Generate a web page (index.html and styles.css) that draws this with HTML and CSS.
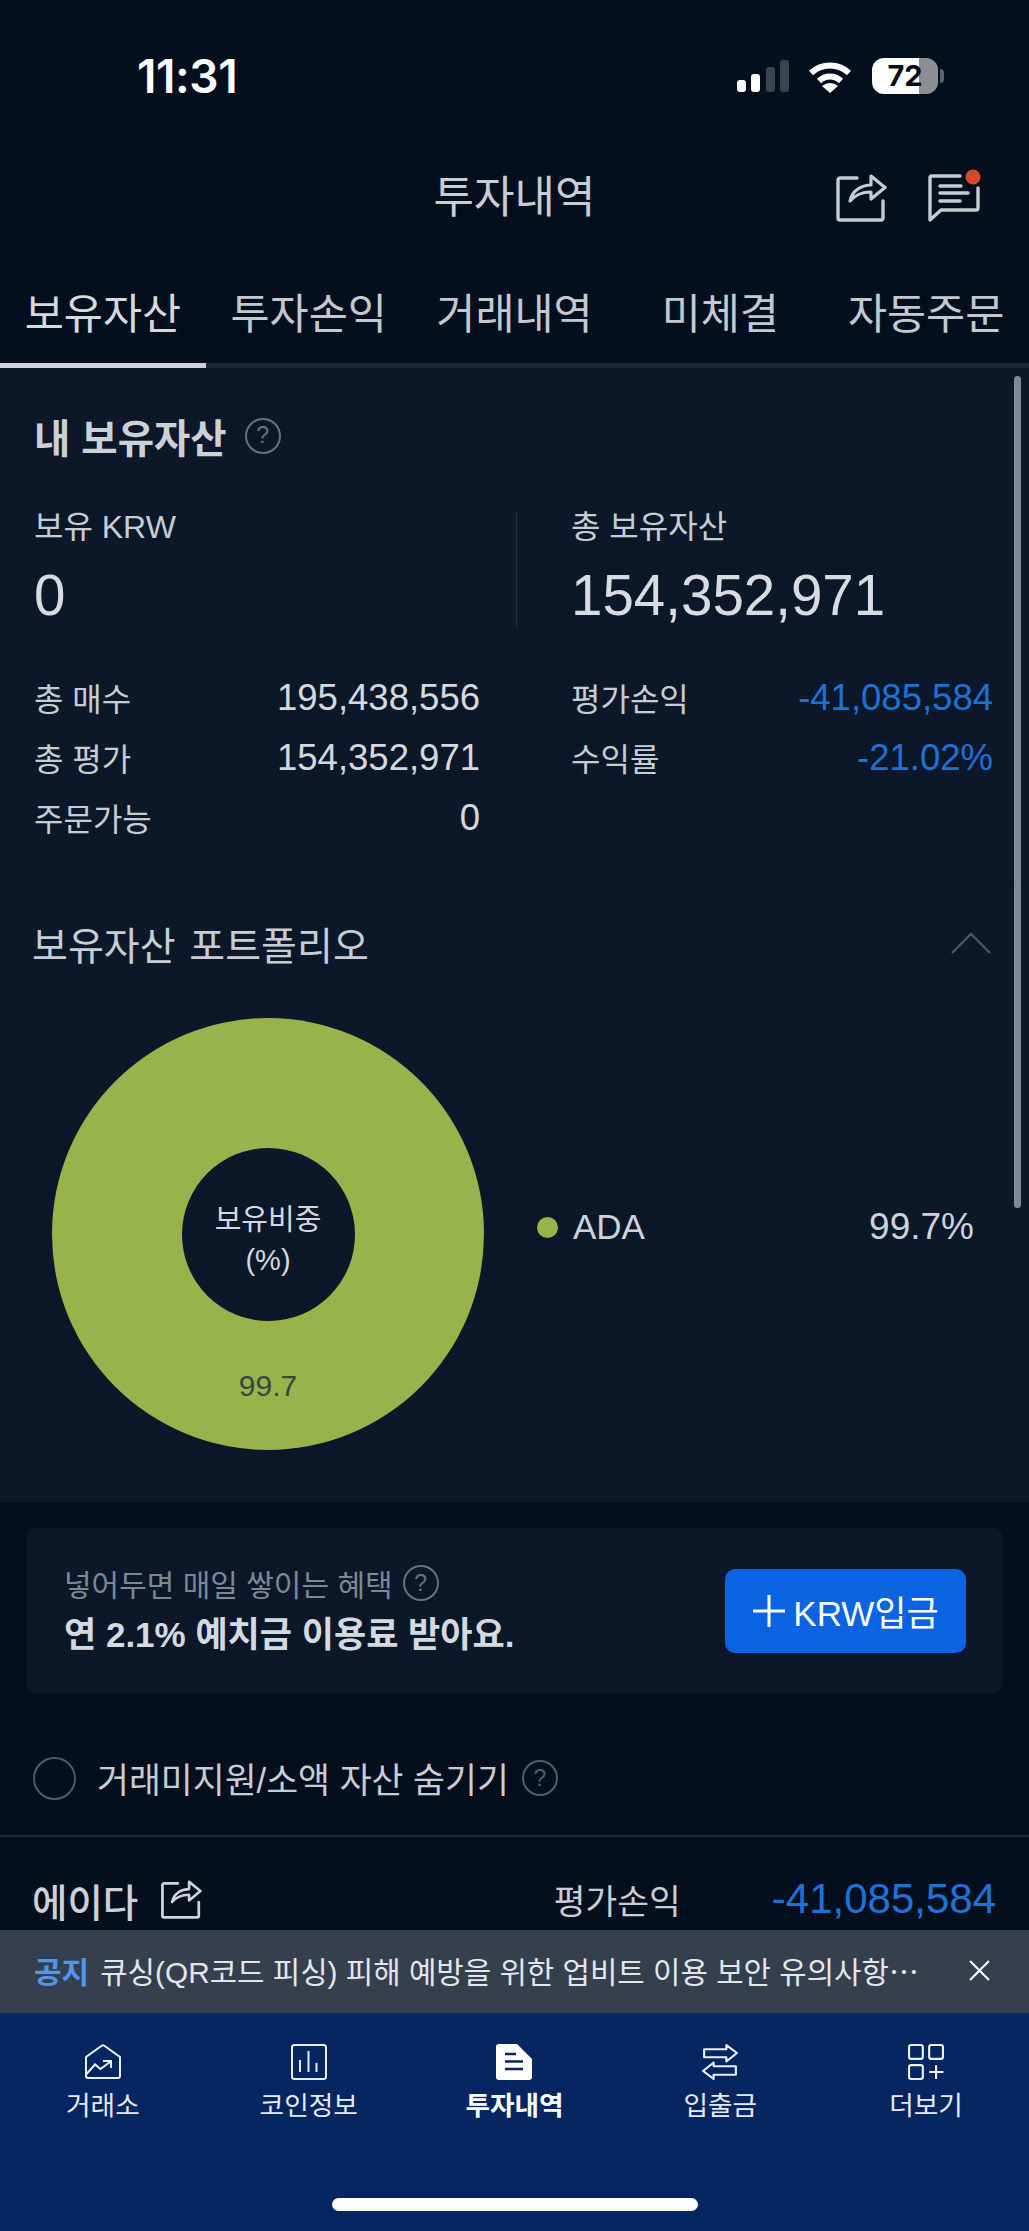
FILE: index.html
```html
<!DOCTYPE html>
<html lang="ko">
<head>
<meta charset="utf-8">
<title>투자내역</title>
<link rel="stylesheet" href="styles.css">
</head>
<body>
<svg class="defs" width="0" height="0" aria-hidden="true">
  <symbol id="share" viewBox="0 0 52 49">
    <path d="M22 4H5a2 2 0 0 0-2 2v38a2 2 0 0 0 2 2h41a2 2 0 0 0 2-2V27" fill="none" stroke="currentColor" stroke-width="3.4" stroke-linecap="round"/>
    <path d="M15 27C17 17 26 11 36 11V2L50 13.5 36 25V18C27 18 20 21 15 27Z" fill="none" stroke="currentColor" stroke-width="3.2" stroke-linejoin="round"/>
  </symbol>
</svg>
<div class="screen">
  <div class="status">
    <span class="time">11:31</span>
    <div class="status-icons">
      <div class="signal"><i class="bar b1"></i><i class="bar b2"></i><i class="bar b3"></i><i class="bar b4"></i></div>
      <svg class="wifi" viewBox="0 0 44 33"><path d="M3 13A28 28 0 0 1 41 13M11 21A16 16 0 0 1 33 21" fill="none" stroke="#fff" stroke-width="6"/><path d="M22 33L14 26Q22 20 30 26Z" fill="#fff"/></svg>
      <div class="battery"><span class="batt-body">72</span><span class="batt-cap"></span></div>
    </div>
  </div>

  <header class="header">
    <span></span>
    <h1 class="title">투자내역</h1>
    <div class="actions">
      <svg class="share-lg"><use href="#share"/></svg>
      <svg class="chat" viewBox="0 0 52 48">
        <path d="M31 2H3a2 2 0 0 0-2 2v42l11-10h35a2 2 0 0 0 2-2V14" fill="none" stroke="#c6cbd3" stroke-width="3.4" stroke-linecap="round" stroke-linejoin="round"/>
        <path d="M11 12H32M11 19H39M11 27H31" stroke="#c6cbd3" stroke-width="3.4" stroke-linecap="round"/>
        <circle cx="44" cy="3" r="7.5" fill="#d5482f"/>
      </svg>
    </div>
  </header>

  <nav class="tabs">
    <div class="tab active">보유자산</div>
    <div class="tab">투자손익</div>
    <div class="tab">거래내역</div>
    <div class="tab">미체결</div>
    <div class="tab">자동주문</div>
  </nav>

  <main class="panel">
    <div class="scrollbar"></div>
    <section class="assets">
      <div class="assets-title"><h2>내 보유자산</h2><span class="help">?</span></div>
      <div class="summary">
        <div class="sum-col">
          <div class="sum-label">보유 KRW</div>
          <div class="sum-value">0</div>
        </div>
        <div class="sum-col sum-right">
          <div class="sum-label">총 보유자산</div>
          <div class="sum-value">154,352,971</div>
        </div>
      </div>
      <div class="stats">
        <div class="stat-col">
          <div class="stat-row"><span>총 매수</span><b>195,438,556</b></div>
          <div class="stat-row"><span>총 평가</span><b>154,352,971</b></div>
          <div class="stat-row"><span>주문가능</span><b>0</b></div>
        </div>
        <div class="stat-col">
          <div class="stat-row"><span>평가손익</span><b class="neg">-41,085,584</b></div>
          <div class="stat-row"><span>수익률</span><b class="neg">-21.02%</b></div>
        </div>
      </div>
    </section>

    <section class="portfolio">
      <div class="port-head">
        <h2>보유자산 포트폴리오</h2>
        <svg class="chevron" viewBox="0 0 40 22"><path d="M1 21L20 2 39 21" fill="none" stroke="#4b5563" stroke-width="2.4"/></svg>
      </div>
      <div class="port-body">
        <div class="donut">
          <div class="hole">보유비중<br>(%)</div>
          <span class="donut-value">99.7</span>
        </div>
        <div class="legend">
          <i class="dot"></i><span class="leg-name">ADA</span><span class="leg-value">99.7%</span>
        </div>
      </div>
    </section>
  </main>

  <section class="banner">
    <div class="banner-text">
      <div class="banner-sub"><span>넣어두면 매일 쌓이는 혜택</span><span class="help">?</span></div>
      <div class="banner-main">연 2.1% 예치금 이용료 받아요.</div>
    </div>
    <div class="deposit">
      <svg class="plus" viewBox="0 0 34 34"><path d="M17 1V33M1 17H33" stroke="#fff" stroke-width="3"/></svg>
      <span>KRW입금</span>
    </div>
  </section>

  <div class="hide-row">
    <i class="radio"></i>
    <span>거래미지원/소액 자산 숨기기</span>
    <span class="help">?</span>
  </div>

  <div class="holding">
    <div class="hold-left"><strong>에이다</strong><svg class="share-sm"><use href="#share"/></svg></div>
    <div class="hold-right"><span>평가손익</span><b>-41,085,584</b></div>
  </div>

  <div class="notice">
    <strong>공지</strong>
    <span class="notice-text">큐싱(QR코드 피싱) 피해 예방을 위한 업비트 이용 보안 유의사항⋯</span>
    <svg class="close" viewBox="0 0 20 20"><path d="M1 1L19 19M19 1L1 19" stroke="#fff" stroke-width="2"/></svg>
  </div>

  <footer class="bottom">
    <div class="nav">
      <div class="nav-item">
        <svg class="nav-icon" viewBox="0 0 36 36"><path d="M17 1.5a2 2 0 0 1 2 0L35 13V32a2 2 0 0 1-2 2H3a2 2 0 0 1-2-2V13Z" fill="none" stroke="#eaf0f8" stroke-width="2"/><path d="M1.500 30L10 20.500 15.500 25 25 18M18 17H26V24" fill="none" stroke="#eaf0f8" stroke-width="2"/></svg>
        <span>거래소</span>
      </div>
      <div class="nav-item">
        <svg class="nav-icon" viewBox="0 0 36 36"><rect x="1" y="1" width="34" height="34" rx="2.500" fill="none" stroke="#eaf0f8" stroke-width="2"/><path d="M9 16V28M17.500 7V28M25.500 19V28" stroke="#eaf0f8" stroke-width="2"/></svg>
        <span>코인정보</span>
      </div>
      <div class="nav-item current">
        <svg class="nav-icon" viewBox="0 0 36 36"><path d="M3 0H21L36 15V33a3 3 0 0 1-3 3H3a3 3 0 0 1-3-3V3a3 3 0 0 1 3-3Z" fill="#fff"/><path d="M9 10H20M9 17.500H27M9 25H27" stroke="#052660" stroke-width="2.600"/></svg>
        <span>투자내역</span>
      </div>
      <div class="nav-item">
        <svg class="nav-icon" viewBox="0 0 34 34"><path d="M2 5H23V1L33 8.500 23 16.500V12.500H2Z" fill="none" stroke="#eaf0f8" stroke-width="2" stroke-linejoin="round"/><path d="M32 21H11V17.500L1 25.500 11 33V29H32Z" fill="none" stroke="#eaf0f8" stroke-width="2" stroke-linejoin="round"/></svg>
        <span>입출금</span>
      </div>
      <div class="nav-item">
        <svg class="nav-icon" viewBox="0 0 34 34"><rect x="1" y="1" width="13" height="13" rx="2" fill="none" stroke="#eaf0f8" stroke-width="2"/><rect x="20" y="1" width="13" height="13" rx="2" fill="none" stroke="#eaf0f8" stroke-width="2"/><rect x="1" y="20" width="13" height="13" rx="2" fill="none" stroke="#eaf0f8" stroke-width="2"/><path d="M20 26.500H33.500M26.500 20V33" stroke="#eaf0f8" stroke-width="2"/></svg>
        <span>더보기</span>
      </div>
    </div>
    <div class="home"></div>
  </footer>
</div>
</body>
</html>
```
FILE: styles.css
```css
* { box-sizing: border-box; }
html, body { margin: 0; padding: 0; }
body {
  width: 1029px;
  height: 2231px;
  overflow: hidden;
  background: #040f1e;
  color: #c8ccd4;
  font-family: "Liberation Sans", "Noto Sans CJK KR", sans-serif;
}
.defs { position: absolute; }
h1, h2 { margin: 0; font-weight: 400; }
b { font-weight: 400; }
i { display: block; }

.screen { width: 1029px; height: 2231px; display: flex; flex-direction: column; }

/* status bar */
.status { height: 130px; padding: 22px 85px 0 137px; display: flex; align-items: center; justify-content: space-between; }
.time { font-family: Inter, "Liberation Sans", sans-serif; font-size: 46px; font-weight: 600; color: #fff; letter-spacing: -0.4px; }
.status-icons { display: flex; align-items: center; }
.signal { display: flex; align-items: flex-end; gap: 5.5px; height: 32px; margin-right: 19px; }
.bar { width: 9px; border-radius: 3px; background: #fff; }
.b1 { height: 12px; }
.b2 { height: 18px; }
.b3 { height: 25px; background: #3a4350; }
.b4 { height: 32px; background: #3a4350; }
.wifi { width: 44px; height: 33px; margin-right: 20px; }
.battery { display: flex; align-items: center; gap: 2px; }
.batt-body {
  width: 66px; height: 36px; border-radius: 12px;
  background: linear-gradient(to right, #fff 71%, #8b8f94 71%);
  color: #050b14; font-family: Inter, "Liberation Sans", sans-serif;
  font-size: 29px; font-weight: 700; line-height: 36px; text-align: center;
}
.batt-cap { width: 4px; height: 14px; border-radius: 0 4px 4px 0; background: #5c6269; }

/* header */
.header { height: 130px; display: grid; grid-template-columns: 1fr auto 1fr; align-items: center; padding: 0 48px; }
.title { font-size: 44px; line-height: 50px; padding-top: 5px; height: 55px; color: #c8ccd4; }
.actions { display: flex; justify-content: flex-end; gap: 42px; padding-top: 7px; }
.share-lg { width: 52px; height: 49px; color: #c6cbd3; }
.chat { width: 52px; height: 48px; overflow: visible; }

/* tabs */
.tabs { display: grid; grid-template-columns: repeat(5, 1fr); }
.tab { height: 108px; padding-bottom: 2px; border-bottom: 5px solid #1d2938; display: flex; align-items: center; justify-content: center; font-size: 42.5px; color: #c4c9d1; }
.tab.active { border-bottom-color: #d0d4dc; color: #d4d8df; }

/* panel */
.panel { position: relative; background: #0c1829; height: 1134px; }
.scrollbar { position: absolute; top: 8px; right: 8px; width: 7px; height: 832px; border-radius: 4px; background: #7f8a99; }

.help { display: inline-flex; align-items: center; justify-content: center; width: 36px; height: 36px; flex: none; border: 2px solid #68717d; border-radius: 50%; font-size: 23px; color: #68717d; }

.assets { padding: 47px 36px 36px 34px; }
.assets-title { display: flex; align-items: center; gap: 18px; height: 41px; }
.assets-title h2 { font-size: 39.5px; font-weight: 700; color: #ccd0d7; }
.summary { display: flex; margin-top: 56px; height: 116px; }
.sum-col { width: 482px; display: flex; flex-direction: column; justify-content: space-between; }
.sum-right { flex: 1; border-left: 1px solid #252f3e; padding-left: 54px; }
.sum-label { font-size: 32px; line-height: 30px; color: #c8ccd4; }
.sum-value { font-size: 56.5px; line-height: 60px; margin-bottom: 2px; color: #d8dbe1; }
.stats { display: flex; justify-content: space-between; margin-top: 40px; }
.stat-col { display: flex; flex-direction: column; }
.stat-col:first-child { width: 446px; }
.stat-col:last-child { width: 422px; }
.stat-row { height: 60px; display: flex; align-items: center; justify-content: space-between; font-size: 32px; color: #c8ccd4; }
.stat-row span { margin-bottom: 3px; }
.stat-row b { font-size: 36.5px; color: #d5d8de; }
.stat-row b.neg { color: #1d72d8; }

.portfolio { border-top: 2px solid #0a1524; }
.port-head { height: 114px; padding: 0 38px 0 32px; display: flex; align-items: center; justify-content: space-between; }
.port-head h2 { font-size: 39px; word-spacing: 3px; color: #c8ccd4; }
.chevron { width: 40px; height: 22px; }
.port-body { display: flex; align-items: center; padding: 18px 55px 52px 52px; }
.donut { position: relative; width: 432px; height: 432px; flex: none; border-radius: 50%; background: #9ab24c; display: flex; align-items: center; justify-content: center; }
.hole { width: 173px; height: 173px; padding-top: 11px; border-radius: 50%; background: #0c1829; display: flex; align-items: center; justify-content: center; text-align: center; font-size: 29px; line-height: 40px; color: #d4d8df; }
.donut-value { position: absolute; left: 0; right: 0; bottom: 46px; text-align: center; font-size: 30px; line-height: 36px; color: #3a4540; }
.legend { flex: 1; margin-left: 53px; margin-bottom: 14px; display: flex; align-items: center; color: #cdd2dc; }
.dot { width: 21px; height: 21px; border-radius: 50%; background: #9ab24c; margin-right: 15px; }
.leg-name { font-size: 35px; }
.leg-value { margin-left: auto; font-size: 37px; }

/* banner */
.banner { margin: 26px 27px 0; height: 165px; padding: 0 36px 0 37px; border-radius: 8px; background: #0c1829; display: flex; align-items: center; justify-content: space-between; }
.banner-text { padding-bottom: 3px; }
.banner-sub { display: flex; align-items: center; gap: 10px; height: 52px; font-size: 30px; color: #7e8795; }
.banner-main { height: 52px; line-height: 52px; font-size: 35px; font-weight: 700; color: #d5d9e0; }
.deposit { width: 241px; height: 84px; border-radius: 10px; background: #0a63e0; display: flex; align-items: center; justify-content: center; gap: 7px; color: #fff; font-size: 35px; }
.plus { width: 34px; height: 34px; }

/* hide row */
.hide-row { height: 144px; padding: 28px 0 0 33px; border-bottom: 2px solid #1d2938; display: flex; align-items: center; font-size: 34.7px; color: #c8ccd4; }
.radio { width: 43px; height: 43px; border: 2px solid #515b68; border-radius: 50%; margin-right: 21px; }
.hide-row .help { margin-left: 13px; color: #535d69; border-color: #535d69; }

/* holding */
.holding { height: 93px; padding: 30px 33px 0 32px; display: flex; align-items: center; justify-content: space-between; }
.hold-left { display: flex; align-items: center; gap: 22px; padding-top: 2px; }
.hold-left strong { font-size: 38.5px; font-weight: 500; color: #ccd0d7; }
.share-sm { width: 42px; height: 40px; color: #cfd3da; }
.hold-right { display: flex; align-items: center; gap: 91px; font-size: 34.5px; color: #c8ccd4; }
.hold-right b { font-size: 42px; color: #1d72d8; }

/* notice */
.notice { height: 83px; padding: 0 39px 3px 34px; background: #363f4d; display: flex; align-items: center; font-size: 29.8px; color: #e3e6ea; }
.notice strong { color: #4f97ee; font-weight: 700; font-size: 30px; margin-right: 11px; }
.notice-text { flex: 1; white-space: nowrap; overflow: hidden; }
.close { width: 21px; height: 21px; flex: none; }

/* bottom nav */
.bottom { flex: 1; background: #052660; display: flex; flex-direction: column; }
.nav { display: grid; grid-template-columns: repeat(5, 1fr); padding-top: 31px; }
.nav-item { display: flex; flex-direction: column; align-items: center; gap: 8px; font-size: 26.7px; line-height: 36px; color: #e6ebf3; }
.nav-item.current { color: #fff; font-weight: 700; }
.nav-icon { width: 36px; height: 36px; }
.home { width: 366px; height: 13px; margin: 74px auto 0; border-radius: 7px; background: #fff; }
```
